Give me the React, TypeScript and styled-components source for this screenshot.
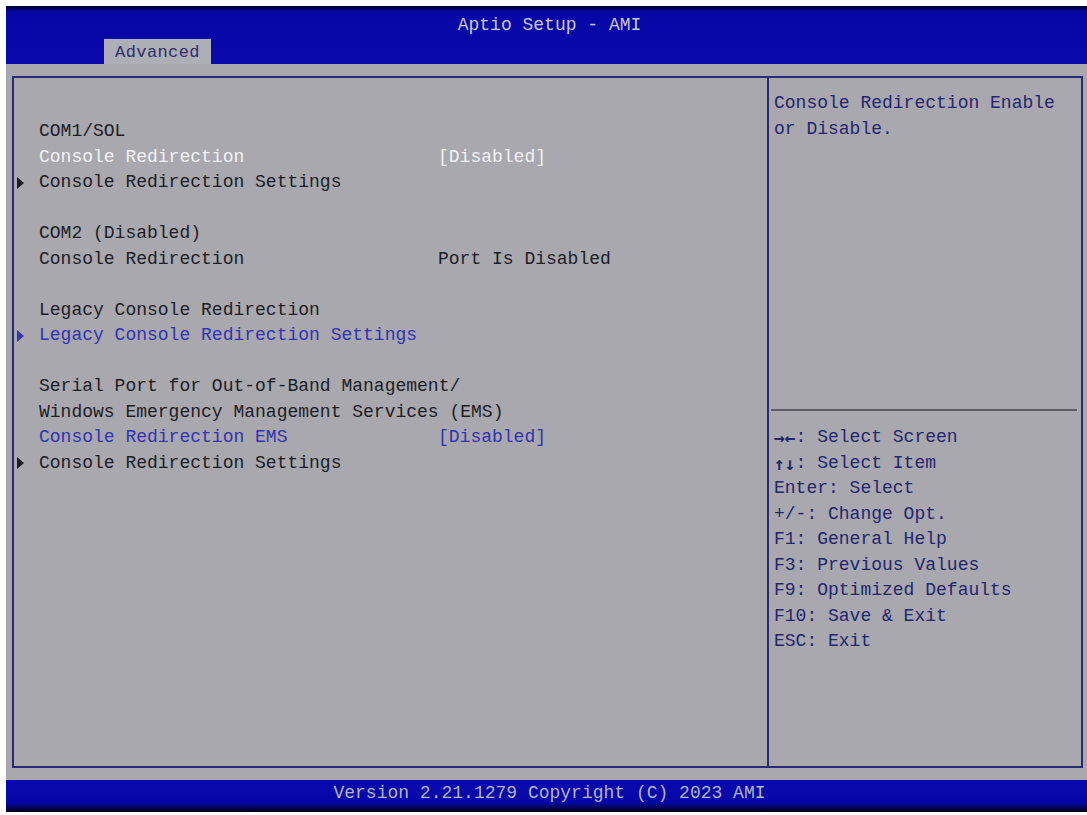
import React from 'react';
import styled, { createGlobalStyle } from 'styled-components';

const GlobalStyle = createGlobalStyle`
  html, body {
    margin: 0;
    padding: 0;
    background: #ffffff;
  }
  body {
    font-family: "Liberation Mono", "DejaVu Sans Mono", monospace;
  }
`;

const Screen = styled.div`
  width: 1081px;
  height: 806px;
  margin: 6px 0 0 6px;
  display: flex;
  flex-direction: column;
  background: #a7a7ad;
  font-family: "Liberation Mono", "DejaVu Sans Mono", monospace;
  font-size: 18px;
  line-height: 25.5px;
`;

const Header = styled.div`
  height: 58px;
  display: flex;
  flex-direction: column;
  background: linear-gradient(#00002a 0px, #0707a6 6px, #0808ac 100%);
`;

const Title = styled.div`
  height: 33px;
  display: flex;
  align-items: center;
  justify-content: center;
  padding-left: 6px;
  padding-top: 7px;
  box-sizing: border-box;
  color: #c9c9d6;
`;

const TabRow = styled.div`
  flex: 1;
  display: flex;
  align-items: flex-end;
  padding-left: 98px;
`;

const Tab = styled.div`
  width: 107px;
  height: 25px;
  display: flex;
  align-items: center;
  justify-content: center;
  padding-top: 3px;
  box-sizing: border-box;
  background: #aeaeb6;
  color: #2e2e6a;
  font-size: 17px;
  letter-spacing: 0.4px;
`;

const Body = styled.div`
  flex: 1;
  padding: 12px 4px 12px 6px;
  display: flex;
`;

const Panel = styled.div`
  flex: 1;
  display: flex;
  border: 2px solid #2a2a74;
  background: #a8a8ae;
`;

const MainColumn = styled.div`
  width: 755px;
  padding-top: 41px;
  box-sizing: border-box;
  border-right: 2px solid #2a2a74;
`;

const SideColumn = styled.div`
  flex: 1;
  display: flex;
  flex-direction: column;
`;

const HelpTop = styled.div`
  height: 331px;
  padding: 13px 0 0 5px;
  box-sizing: border-box;
  color: #25256e;
`;

const Separator = styled.div`
  height: 2px;
  margin: 0 4px 0 2px;
  background: #5c5c68;
`;

const KeyList = styled.div`
  padding: 14px 0 0 5px;
  color: #25256e;
`;

const Line = styled.div`
  height: 25.5px;
  white-space: pre;
`;

// the arrow pairs are tiny in Liberation Mono, DejaVu draws them bolder
const Keys = styled.span`
  display: inline-block;
  width: 21.6px;
  overflow: hidden;
  vertical-align: top;
  font-family: "DejaVu Sans Mono", monospace;
  font-size: 18px;
  font-weight: bold;
`;

type Tone = 'normal' | 'white' | 'blue';

const toneColor: Record<Tone, string> = {
  normal: '#1d1d26',
  white: '#f2f2f6',
  blue: '#3333b4',
};

const Row = styled.div<{ $tone: Tone }>`
  height: 25.5px;
  display: grid;
  grid-template-columns: 25px 399px 1fr;
  align-items: center;
  white-space: pre;
  color: ${(p) => toneColor[p.$tone]};
`;

const MarkerCell = styled.div`
  padding-left: 3px;
  display: flex;
  align-items: center;
`;

const Arrow = styled.span<{ $color: string }>`
  width: 0;
  height: 0;
  border-top: 6px solid transparent;
  border-bottom: 6px solid transparent;
  border-left: 7px solid ${(p) => p.$color};
`;

const Value = styled.span<{ $tone: Tone }>`
  color: ${(p) => toneColor[p.$tone]};
`;

const Footer = styled.div`
  height: 32px;
  display: flex;
  align-items: center;
  justify-content: center;
  padding-left: 6px;
  padding-bottom: 4px;
  box-sizing: border-box;
  background: linear-gradient(#0808ae 0%, #0707a8 70%, #000018 100%);
  color: #b4b4c8;
`;

interface Item {
  label?: string;
  value?: string;
  tone?: Tone;
  valueTone?: Tone;
  submenu?: boolean;
}

const items: Item[] = [
  { label: 'COM1/SOL' },
  { label: 'Console Redirection', value: '[Disabled]', tone: 'white', valueTone: 'white' },
  { label: 'Console Redirection Settings', submenu: true },
  {},
  { label: 'COM2 (Disabled)' },
  { label: 'Console Redirection', value: 'Port Is Disabled' },
  {},
  { label: 'Legacy Console Redirection' },
  { label: 'Legacy Console Redirection Settings', submenu: true, tone: 'blue' },
  {},
  { label: 'Serial Port for Out-of-Band Management/' },
  { label: 'Windows Emergency Management Services (EMS)' },
  { label: 'Console Redirection EMS', value: '[Disabled]', tone: 'blue', valueTone: 'blue' },
  { label: 'Console Redirection Settings', submenu: true },
];

const keys: { arrows?: string; text: string }[] = [
  { arrows: '→←', text: ': Select Screen' },
  { arrows: '↑↓', text: ': Select Item' },
  { text: 'Enter: Select' },
  { text: '+/-: Change Opt.' },
  { text: 'F1: General Help' },
  { text: 'F3: Previous Values' },
  { text: 'F9: Optimized Defaults' },
  { text: 'F10: Save & Exit' },
  { text: 'ESC: Exit' },
];

export default function App() {
  return (
    <>
      <GlobalStyle />
      <Screen>
        <Header>
          <Title>Aptio Setup - AMI</Title>
          <TabRow>
            <Tab>Advanced</Tab>
          </TabRow>
        </Header>
        <Body>
          <Panel>
            <MainColumn>
              {items.map((it, i) => {
                const tone = it.tone ?? 'normal';
                return (
                  <Row key={i} $tone={tone}>
                    <MarkerCell>
                      {it.submenu && <Arrow $color={toneColor[tone]} />}
                    </MarkerCell>
                    <span>{it.label ?? ''}</span>
                    {it.value ? <Value $tone={it.valueTone ?? 'normal'}>{it.value}</Value> : <span />}
                  </Row>
                );
              })}
            </MainColumn>
            <SideColumn>
              <HelpTop>
                <Line>Console Redirection Enable</Line>
                <Line>or Disable.</Line>
              </HelpTop>
              <Separator />
              <KeyList>
                {keys.map((k) => (
                  <Line key={k.text}>
                    {k.arrows && <Keys>{k.arrows}</Keys>}
                    {k.text}
                  </Line>
                ))}
              </KeyList>
            </SideColumn>
          </Panel>
        </Body>
        <Footer>Version 2.21.1279 Copyright (C) 2023 AMI</Footer>
      </Screen>
    </>
  );
}
